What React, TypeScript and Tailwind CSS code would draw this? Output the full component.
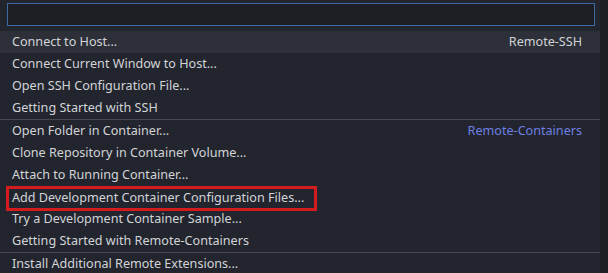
import React from 'react';

const groups = [
  {
    label: 'Remote-SSH',
    labelClass: 'text-[#cfd1d6]',
    items: [
      'Connect to Host...',
      'Connect Current Window to Host...',
      'Open SSH Configuration File...',
      'Getting Started with SSH',
    ],
  },
  {
    label: 'Remote-Containers',
    labelClass: 'text-[#6f7fe3]',
    items: [
      'Open Folder in Container...',
      'Clone Repository in Container Volume...',
      'Attach to Running Container...',
      'Add Development Container Configuration Files...',
      'Try a Development Container Sample...',
      'Getting Started with Remote-Containers',
    ],
  },
  {
    label: '',
    labelClass: '',
    items: ['Install Additional Remote Extensions...'],
  },
];

const App: React.FC = () => {
  return (
    <div
      className="w-[608px] h-[273px] overflow-hidden bg-[#22252d] flex text-[12.6px] text-[#d2d4d8]"
      style={{ fontFamily: '"Noto Sans", "Open Sans", sans-serif' }}
    >
      <div className="w-[600px] flex flex-col">
        <div className="pt-[3px] pb-[5px] pl-[7px] pr-[5px]">
          <div className="h-[23px] border border-[#3d6aa3] bg-[#1c1e24]" />
        </div>
        {groups.map((group, gi) => (
          <div key={gi} className={gi > 0 ? 'border-t border-[#474a52]' : ''}>
            {group.items.map((item, i) => (
              <div
                key={item}
                className={`h-[22px] flex items-center justify-between pl-[12px] pr-[18px] ${
                  gi === 0 && i === 0 ? 'bg-[#2d3039]' : ''
                }`}
              >
                {item === 'Add Development Container Configuration Files...' ? (
                  <span className="-ml-[6px] mt-[3px] pl-[3px] pr-[10px] h-[25px] flex items-center border-[3px] border-[#d41c1f] leading-none whitespace-nowrap">
                    {item}
                  </span>
                ) : (
                  <span className="whitespace-nowrap">{item}</span>
                )}
                {i === 0 && group.label ? (
                  <span className={group.labelClass}>{group.label}</span>
                ) : null}
              </div>
            ))}
          </div>
        ))}
      </div>
      <div className="flex-1 bg-[#1d1f25]" />
    </div>
  );
};

export default App;
